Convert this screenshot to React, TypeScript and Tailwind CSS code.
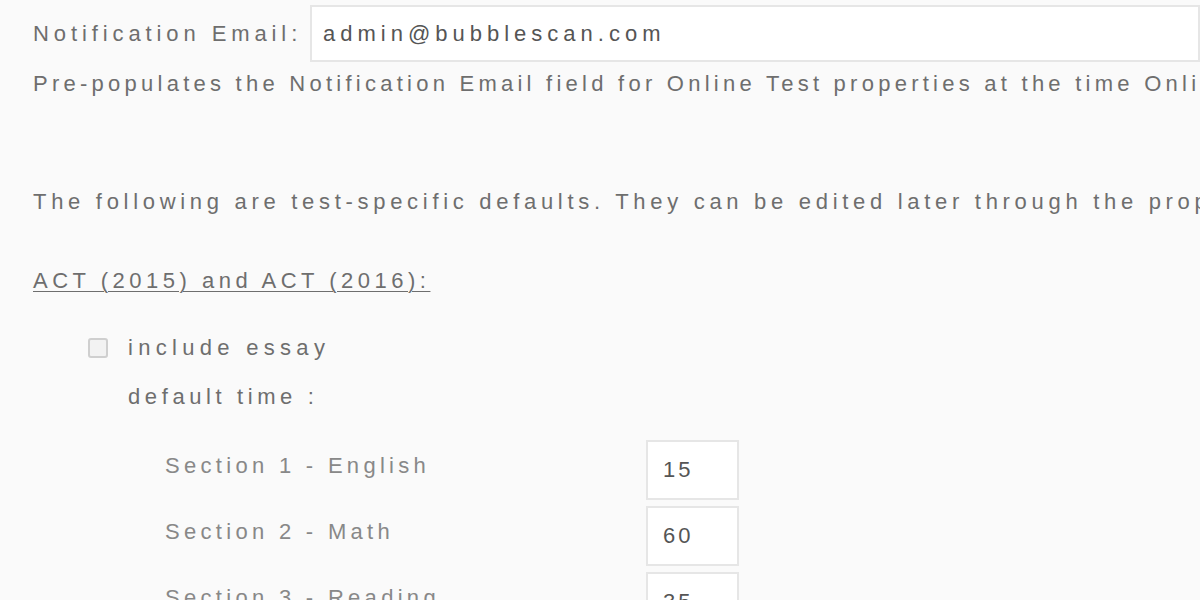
import React from 'react';

type Section = { label: string; minutes: string };

const sections: Section[] = [
  { label: 'Section 1 - English', minutes: '15' },
  { label: 'Section 2 - Math', minutes: '60' },
  { label: 'Section 3 - Reading', minutes: '35' },
];

export default function App() {
  return (
    <div className="h-[600px] w-[1200px] overflow-hidden bg-[#fafafa] pl-[33px] font-['Liberation_Sans',Arial,sans-serif] text-[22px] leading-[26px] tracking-[4.6px] text-[#6e6e6e] whitespace-nowrap">
      {/* notification email */}
      <div className="mt-[5px] flex items-center">
        <span className="w-[277px] shrink-0 tracking-[4.9px]">Notification Email:</span>
        <div className="flex h-[57px] flex-1 items-center border-2 border-[#e6e6e6] bg-white pl-[11px] text-[#555555] tracking-[5px]">
          admin@bubblescan.com
        </div>
      </div>
      <p className="mt-[9px] tracking-[4.25px]">
        Pre-populates the Notification Email field for Online Test properties at the time Online Tests are created.
      </p>

      <p className="mt-[92px] tracking-[4.7px]">
        The following are test-specific defaults. They can be edited later through the properties page.
      </p>

      {/* ACT block */}
      <div className="mt-[53px] inline-block underline decoration-1 underline-offset-[3px] tracking-[4.5px]">
        ACT (2015) and ACT (2016):
      </div>

      <div className="ml-[55px] mt-[41px] flex items-center">
        <span className="h-[20px] w-[20px] shrink-0 rounded-[3px] border-2 border-[#cfcfcf] bg-[#f2f2f2]" />
        <span className="ml-[20px] tracking-[5.3px]">include essay</span>
      </div>
      <div className="ml-[95px] mt-[23px]">default time :</div>

      <div className="ml-[132px] mt-[30px] flex flex-col gap-[6px]">
        {sections.map((s) => (
          <div key={s.label} className="flex items-center">
            <span className="w-[481px] shrink-0 pb-[8px] text-[#888888] tracking-[4.3px]">{s.label}</span>
            <div className="flex h-[60px] w-[93px] items-center border-2 border-[#e6e6e6] bg-white pl-[15px] text-[#555555] tracking-[3px]">
              {s.minutes}
            </div>
          </div>
        ))}
      </div>
    </div>
  );
}
